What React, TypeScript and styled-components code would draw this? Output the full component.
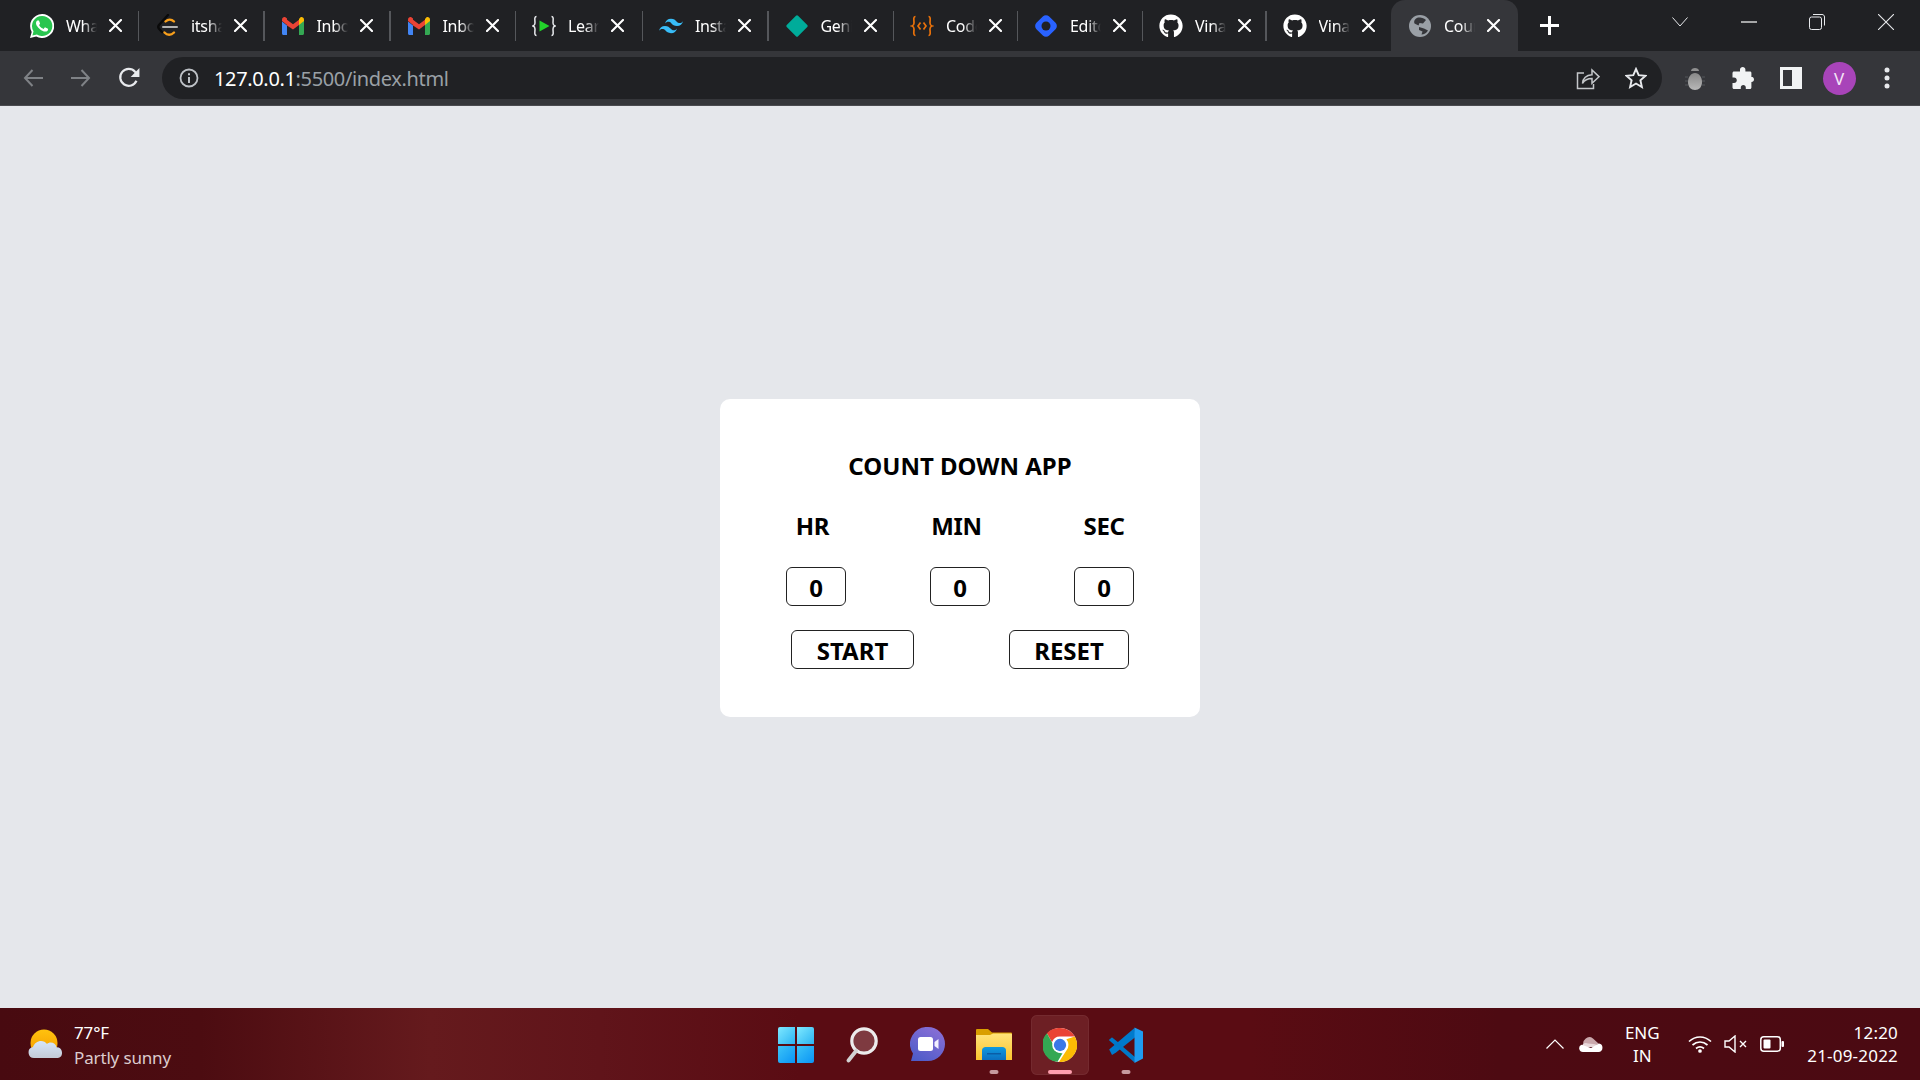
import React from "react";
import styled, { createGlobalStyle } from "styled-components";
import { FaGithub } from "react-icons/fa";
import { SiTailwindcss } from "react-icons/si";

const Global = createGlobalStyle`
  html, body { margin: 0; padding: 0; height: 100%; overflow: hidden; }
  body { font-family: "Noto Sans", "Open Sans", sans-serif; background: #e5e7eb; }
  #root { height: 100%; }
`;

const Screen = styled.div`
  display: flex;
  flex-direction: column;
  width: 1920px;
  height: 1080px;
`;

/* ---------- tab strip ---------- */
const TabStrip = styled.div`
  display: flex;
  align-items: stretch;
  height: 51px;
  padding-left: 14px;
  background: #202124;
`;

const Tab = styled.div<{ $w: number; $active?: boolean; $sep?: boolean }>`
  position: relative;
  display: flex;
  align-items: center;
  flex: 0 0 ${(p) => p.$w}px;
  box-sizing: border-box;
  padding-left: 16px;
  color: #fff;
  ${(p) =>
    p.$active &&
    `
    z-index: 0;
    &::before {
      content: "";
      position: absolute;
      z-index: -1;
      top: 0; bottom: 0; left: -1px; right: 0;
      background: #35363a;
      border-radius: 14px 14px 0 0;
    }
  `}
  ${(p) =>
    p.$sep &&
    `
    &::after {
      content: "";
      position: absolute;
      right: 0; top: 11px;
      width: 1.5px; height: 30px;
      background: #55575b;
    }
  `}
`;

const FavSlot = styled.span`
  display: flex;
  align-items: center;
  justify-content: center;
  flex: 0 0 24px;
  width: 24px;
  height: 24px;
`;

const TabLabel = styled.span`
  flex: 0 0 31px;
  width: 31px;
  margin-left: 12px;
  overflow: hidden;
  white-space: nowrap;
  font-size: 16px;
  letter-spacing: -0.3px;
  line-height: 22px;
  -webkit-mask-image: linear-gradient(90deg, #000 55%, transparent 100%);
  mask-image: linear-gradient(90deg, #000 55%, transparent 100%);
`;

const TabClose = styled.span`
  display: flex;
  margin-left: 12px;
`;

const NewTab = styled.span`
  display: flex;
  align-items: center;
  justify-content: center;
  width: 24px;
  margin-left: 19.5px;
`;

const WindowControls = styled.div`
  display: flex;
  align-self: flex-start;
  height: 44px;
  margin-left: auto;
`;

const WindowButton = styled.span`
  display: flex;
  align-items: center;
  justify-content: center;
  width: 68.5px;
`;

/* ---------- toolbar ---------- */
const Toolbar = styled.div`
  display: flex;
  align-items: center;
  height: 54px;
  padding-left: 9px;
  background: #35363a;
  border-bottom: 1px solid #4a4b4f;
`;

const ToolButton = styled.span`
  display: flex;
  align-items: center;
  justify-content: center;
  flex: 0 0 48px;
  height: 42px;
`;

const Omnibox = styled.div`
  display: flex;
  align-items: center;
  flex: 0 0 1500px;
  height: 42px;
  margin: 0 9px;
  padding: 0 2px 0 17px;
  box-sizing: border-box;
  background: #202124;
  border-radius: 21px;
`;

const Url = styled.span`
  margin-left: 15px;
  font-size: 20px;
  letter-spacing: -0.35px;
  color: #9aa0a6;
  white-space: nowrap;
`;

const UrlHost = styled.span`
  color: #fff;
`;

const OmniActions = styled.div`
  display: flex;
  margin-left: auto;
`;

const OmniAction = styled.span`
  display: flex;
  align-items: center;
  justify-content: center;
  width: 48px;
`;

const Avatar = styled.span`
  display: flex;
  align-items: center;
  justify-content: center;
  width: 33px;
  height: 33px;
  border-radius: 50%;
  background: #a844b9;
  color: #f4e6f6;
  font-size: 17px;
`;

/* ---------- page ---------- */
const Page = styled.main`
  flex: 1;
  display: flex;
  align-items: center;
  justify-content: center;
  padding-top: 2px;
  background: #e5e7eb;
`;

const Card = styled.section`
  width: 480px;
  height: 318px;
  box-sizing: border-box;
  padding-top: 51px;
  background: #fff;
  border-radius: 10px;
  color: #000;
`;

const Title = styled.h1`
  margin: 0;
  font-size: 24px;
  font-weight: 700;
  line-height: 32px;
  text-align: center;
`;

const Columns = styled.div`
  display: grid;
  grid-template-columns: repeat(3, 144px);
  justify-content: center;
  justify-items: center;
`;

const LabelRow = styled(Columns)`
  margin-top: 28px;
`;

const InputRow = styled(Columns)`
  margin-top: 25px;
`;

const UnitLabel = styled.label<{ $shift?: number }>`
  font-size: 24px;
  font-weight: 700;
  line-height: 32px;
  letter-spacing: -0.4px;
  padding-right: ${(p) => p.$shift ?? 0}px;
`;

const TimeInput = styled.input`
  width: 60px;
  height: 39px;
  box-sizing: border-box;
  padding: 2px 0 0;
  border: 1px solid #222;
  border-radius: 6px;
  background: #fff;
  color: #000;
  font-family: inherit;
  font-size: 24px;
  font-weight: 700;
  text-align: center;
`;

const ButtonRow = styled.div`
  display: flex;
  gap: 95px;
  margin-top: 24px;
  padding-left: 71px;
`;

const ActionButton = styled.button<{ $w: number }>`
  width: ${(p) => p.$w}px;
  height: 39px;
  box-sizing: border-box;
  padding: 2px 0 0;
  border: 1px solid #222;
  border-radius: 6px;
  background: #fff;
  color: #000;
  font-family: inherit;
  font-size: 24px;
  font-weight: 700;
`;

/* ---------- taskbar ---------- */
const Taskbar = styled.footer`
  display: grid;
  grid-template-columns: 1fr auto 1fr;
  align-items: center;
  height: 72px;
  color: #fff;
  background: linear-gradient(
    90deg,
    #480a10 0,
    #4c0c11 200px,
    #651a1d 430px,
    #60141a 600px,
    #5a0c13 800px,
    #5a0c13 1250px,
    #4d0a12 1500px,
    #4b0a12 1920px
  );
`;

const Weather = styled.div`
  display: flex;
  align-items: center;
  padding-left: 28px;
`;

const WeatherText = styled.div`
  margin-left: 10px;
  padding-top: 2px;
  font-size: 17px;
  line-height: 25px;
  letter-spacing: -0.15px;
`;

const WeatherSub = styled.div`
  color: #dccbce;
`;

const AppDock = styled.div`
  display: flex;
  padding: 2px 0 0 2px;
`;

const AppSlot = styled.span<{ $active?: boolean }>`
  position: relative;
  z-index: 0;
  display: flex;
  align-items: center;
  justify-content: center;
  width: 66.2px;
  height: 60px;
  ${(p) =>
    p.$active &&
    `
    &::before {
      content: "";
      position: absolute;
      z-index: -1;
      inset: 0 4px;
      border-radius: 6px;
      background: #6d1f24;
      box-shadow: inset 0 0 0 1px #742a2f;
    }
  `}
`;

const Indicator = styled.span<{ $active?: boolean }>`
  position: absolute;
  left: 50%;
  bottom: 1px;
  transform: translateX(-50%);
  width: ${(p) => (p.$active ? 24 : 9)}px;
  height: 4px;
  border-radius: 2px;
  background: ${(p) => (p.$active ? "#ff9fae" : "#c79a9f")};
`;

const Tray = styled.div`
  display: flex;
  align-items: center;
  justify-content: flex-end;
  padding-right: 22px;
`;

const TrayIcon = styled.span`
  display: flex;
  align-items: center;
  justify-content: center;
  width: 36px;
`;

const Lang = styled.div`
  width: 54px;
  margin: 0 13px 0 6px;
  font-size: 17px;
  line-height: 23px;
  text-align: center;
`;

const Clock = styled.div`
  margin-left: 17px;
  font-size: 17px;
  line-height: 23px;
  text-align: right;
  letter-spacing: 0.2px;
`;

/* ---------- icons ---------- */
const WhatsApp = () => (
  <svg width="24" height="24" viewBox="0 0 24 24">
    <path fill="#fff" d="M12 0a12 12 0 0 0-10.3 18L0 24l6.2-1.6A12 12 0 1 0 12 0z" />
    <path fill="#29c54f" d="M12 2a10 10 0 0 0-8.5 15.2L2.4 21.6l4.5-1.2A10 10 0 1 0 12 2z" />
    <path
      fill="#fff"
      d="M17.472 14.382c-.297-.149-1.758-.867-2.03-.967-.273-.099-.471-.148-.67.15-.197.297-.767.966-.94 1.164-.173.199-.347.223-.644.075-.297-.15-1.255-.463-2.39-1.475-.883-.788-1.48-1.761-1.653-2.059-.173-.297-.018-.458.13-.606.134-.133.298-.347.446-.52.149-.174.198-.298.298-.497.099-.198.05-.371-.025-.52-.075-.149-.669-1.612-.916-2.207-.242-.579-.487-.5-.669-.51-.173-.008-.371-.01-.57-.01-.198 0-.52.074-.792.372-.272.297-1.04 1.016-1.04 2.479 0 1.462 1.065 2.875 1.213 3.074.149.198 2.096 3.2 5.077 4.487.709.306 1.262.489 1.694.625.712.227 1.36.195 1.871.118.571-.085 1.758-.719 2.006-1.413.248-.694.248-1.289.173-1.413-.074-.124-.272-.198-.57-.347z"
    />
  </svg>
);

const LeetCode = () => (
  <svg width="24" height="24" viewBox="0 0 24 24" fill="none">
    <path d="M13 1 4 11c-1 1.300-1 2.500 0 3.800L7 18" stroke="#0a0a0a" strokeWidth="2.400" strokeLinecap="round" />
    <path d="M10.500 7.500c2.500-2.500 6-2.500 8.500 0" stroke="#f89f1b" strokeWidth="2.400" strokeLinecap="round" />
    <path d="M9.500 18.500c2.800 3 6.500 3 9.500 0" stroke="#f89f1b" strokeWidth="2.400" strokeLinecap="round" />
    <path d="M8 13H22" stroke="#b3b3b3" strokeWidth="2" strokeLinecap="round" />
  </svg>
);

const Gmail = () => (
  <svg width="22" height="18" viewBox="0 0 22 18">
    <path fill="#4285f4" d="M0 3v13.500C0 17.300.7 18 1.500 18H5V8.500L0 4.500z" />
    <path fill="#34a853" d="M17 18h3.500c.8 0 1.500-.7 1.500-1.500V3l-5 4z" />
    <path fill="#ea4335" d="M5 8.500V2.800L11 7.300 17 2.800V8l-6 4.500z" />
    <path fill="#ea4335" d="M0 2.500C0 .6 2.200-.6 3.700.5L5 1.500V8L0 4z" />
    <path fill="#fbbc04" d="M17 2v6l5-4V2.500c0-1.900-2.200-3-3.700-2z" />
  </svg>
);

const LearnBraces = () => (
  <svg width="24" height="24" viewBox="0 0 24 24" fill="none">
    <path d="M4.500 2.500C2 2.500 3 6 3 9c0 1.500-.8 2.600-2 3 1.200.4 2 1.500 2 3 0 3-1 6.500 1.500 6.500" stroke="#e8eaed" strokeWidth="1.500" />
    <path d="M19.500 2.500C22 2.500 21 6 21 9c0 1.500.8 2.600 2 3-1.200.4-2 1.500-2 3 0 3 1 6.500-1.500 6.500" stroke="#e8eaed" strokeWidth="1.500" />
    <path fill="#22d32a" d="M7.500 6.500 17.500 12l-10 5.500z" />
  </svg>
);

const Diamond = () => (
  <svg width="24" height="24" viewBox="0 0 24 24">
    <rect x="4" y="4" width="16" height="16" rx="1.500" transform="rotate(45 12 12)" fill="#00ac9a" />
  </svg>
);

const CodeBraces = () => (
  <svg width="24" height="24" viewBox="0 0 24 24" fill="none" stroke="#e8710a" strokeWidth="1.700">
    <path d="M5.500 2.500C3 2.500 4 6 4 9c0 1.500-.8 2.600-2 3 1.200.4 2 1.500 2 3 0 3-1 6.500 1.500 6.500" />
    <path d="M18.500 2.500C21 2.500 20 6 20 9c0 1.500.8 2.600 2 3-1.200.4-2 1.500-2 3 0 3 1 6.500-1.500 6.500" />
    <path d="M10.500 8.500 8 12l2.500 3.500M13.500 8.500 16 12l-2.500 3.500" />
  </svg>
);

const BlueDiamond = () => (
  <svg width="24" height="24" viewBox="0 0 24 24">
    <rect x="3" y="3" width="18" height="18" rx="4.500" transform="rotate(45 12 12)" fill="#2962ff" />
    <circle cx="12" cy="12" r="4.500" fill="#202124" />
  </svg>
);

const Globe = () => (
  <svg width="22" height="22" viewBox="0 0 22 22">
    <circle cx="11" cy="11" r="11" fill="#9aa0a6" />
    <path fill="#35363a" d="M9 2.500c3 0 6 .5 8 2.500l-3 3.500-3.500-.5-1 2.500-4-2C4.500 6 6 3.500 9 2.500zM10 12l5 1.500 4 2c-1.500 2.500-4 4-6.500 4l1-3-3.500-1.500z" />
  </svg>
);

const Close = () => (
  <svg width="13" height="13" viewBox="0 0 13 13" stroke="#fff" strokeWidth="2.100" strokeLinecap="round">
    <path d="M1 1l11 11M12 1 1 12" />
  </svg>
);

const Plus = () => (
  <svg width="19" height="19" viewBox="0 0 19 19" stroke="#fff" strokeWidth="3">
    <path d="M9.500 0v19M0 9.500h19" />
  </svg>
);

const ChevronDownThin = () => (
  <svg width="16" height="10" viewBox="0 0 16 10" fill="none" stroke="#e8eaed" strokeWidth="1">
    <path d="M.5.500 8 9 15.500.500" />
  </svg>
);
const Minimize = () => (
  <svg width="16" height="2" viewBox="0 0 16 2">
    <path d="M0 1h16" stroke="#fff" strokeWidth="1.200" />
  </svg>
);
const Restore = () => (
  <svg width="16" height="16" viewBox="0 0 16 16" fill="none" stroke="#e8eaed" strokeWidth="1">
    <rect x=".5" y="3" width="12" height="12.500" rx="2" />
    <path d="M4 .5h9c1.500 0 2.500 1 2.500 2.500v8.500" />
  </svg>
);
const WinClose = () => (
  <svg width="16" height="16" viewBox="0 0 16 16" stroke="#e8eaed" strokeWidth="1.100">
    <path d="M0 0l16 16M16 0 0 16" />
  </svg>
);

const Back = ({ color }: { color: string }) => (
  <svg width="20" height="18" viewBox="0 0 20 18" fill="none" stroke={color} strokeWidth="2">
    <path d="M20 9H2M9.500 1 2 9l7.500 8" />
  </svg>
);
const Forward = ({ color }: { color: string }) => (
  <svg width="20" height="18" viewBox="0 0 20 18" fill="none" stroke={color} strokeWidth="2">
    <path d="M0 9h18M10.500 1 18 9l-7.500 8" />
  </svg>
);
const Reload = () => (
  <svg width="22" height="22" viewBox="0 0 20 20" fill="none">
    <path d="M16.800 12.500A7.700 7.700 0 1 1 15.500 4.300L17 5.800" stroke="#e8eaed" strokeWidth="2" />
    <path d="M19.500 1v8h-8z" fill="#e8eaed" />
  </svg>
);
const Info = () => (
  <svg width="20" height="20" viewBox="0 0 20 20" fill="none">
    <circle cx="10" cy="10" r="8.500" stroke="#bdc1c6" strokeWidth="1.800" />
    <path d="M10 9v6M10 5.200v2" stroke="#bdc1c6" strokeWidth="2" />
  </svg>
);
const ShareIcon = () => (
  <svg width="24" height="24" viewBox="0 0 24 24" fill="none" stroke="#c4c7ca" strokeWidth="1.500">
    <path d="M8 7H1.500v15.500h16V18" />
    <path d="M6.500 17.500c.5-5.500 4-8.500 9.500-8.800V4l7 6.700-7 6.500v-4.700c-4.500 0-7.500 1.500-9.500 5z" />
  </svg>
);
const StarIcon = () => (
  <svg width="22" height="22" viewBox="0 0 22 22" fill="none" stroke="#e8eaed" strokeWidth="1.900">
    <path d="M11 2l2.700 6.200 6.800.6-5.100 4.500 1.500 6.700L11 16.500 5.100 20l1.500-6.700L1.500 8.800l6.800-.6z" />
  </svg>
);
const BugIcon = () => (
  <svg width="22" height="26" viewBox="0 0 22 26" fill="none">
    <defs>
      <linearGradient id="bug" x1="0" y1="0" x2="0" y2="1">
        <stop offset="0" stopColor="#888" />
        <stop offset="1" stopColor="#b8b8b8" />
      </linearGradient>
    </defs>
    <path d="M1 12h3M1 16h3M1 20h3M18 12h3M18 16h3M18 20h3" stroke="#55565a" strokeWidth="1" />
    <path d="M7 6c0-4 8-4 8 0z" fill="#8f8f8f" />
    <path d="M11 8c4 0 7 4 7 9 0 5-3 8-7 8s-7-3-7-8c0-5 3-9 7-9z" fill="url(#bug)" />
  </svg>
);
const PuzzleIcon = () => (
  <svg width="22" height="22" viewBox="0 0 22 22">
    <path
      fill="#f1f3f4"
      d="M8 2.600C8 1 9.300 0 10.700 0s2.700 1 2.700 2.600V4.500H18c.8 0 1.400.6 1.400 1.400v4h1C21 9.900 22 11 22 12.500S21 15 19.500 15h-.1v5.500c0 .8-.6 1.500-1.400 1.500h-4.200v-1.500c0-1.500-1-2.500-2.500-2.500s-2.500 1-2.500 2.500V22H2c-.8 0-1.500-.7-1.500-1.500v-4.600H2c1.700 0 2.800-1.200 2.800-2.700S3.700 10.400 2 10.400H.5V6c0-.8.700-1.500 1.500-1.500h6z"
    />
  </svg>
);
const PanelIcon = () => (
  <svg width="22" height="22" viewBox="0 0 22 22" fill="none">
    <path fill="#f1f3f4" fillRule="evenodd" d="M0 0h22v22H0zM3 3v16h9V3z" />
  </svg>
);
const Dots = () => (
  <svg width="6" height="22" viewBox="0 0 6 22" fill="#e8eaed">
    <circle cx="3" cy="3" r="2.500" />
    <circle cx="3" cy="11" r="2.500" />
    <circle cx="3" cy="19" r="2.500" />
  </svg>
);

const WeatherIcon = () => (
  <svg width="36" height="30" viewBox="0 0 36 30">
    <defs>
      <linearGradient id="sun" x1="0" y1="0" x2="0" y2="1">
        <stop offset="0" stopColor="#ffc20e" />
        <stop offset="1" stopColor="#f59a00" />
      </linearGradient>
      <linearGradient id="cloud" x1="0" y1="0" x2="0" y2="1">
        <stop offset="0" stopColor="#d6e6fb" />
        <stop offset="1" stopColor="#c4cad6" />
      </linearGradient>
    </defs>
    <circle cx="16" cy="14" r="13.500" fill="url(#sun)" />
    <path
      fill="url(#cloud)"
      d="M6 29a5.500 5.500 0 0 1-1-10.900C6 14.500 9.500 12 13 12c2.500 0 4.500 1.200 6 3 1-1 2.300-1.500 3.600-1.500 3 0 5.400 2 5.900 4.700a5.500 5.500 0 0 1 1.500 10.800z"
    />
  </svg>
);

const WindowsLogo = () => (
  <svg width="36" height="36" viewBox="0 0 36 36">
    <defs>
      <linearGradient id="winA" x1="0" y1="0" x2="1" y2="1">
        <stop offset="0" stopColor="#7fe9ff" />
        <stop offset="1" stopColor="#2cb4f3" />
      </linearGradient>
      <linearGradient id="winB" x1="0" y1="0" x2="1" y2="1">
        <stop offset="0" stopColor="#3cc4f7" />
        <stop offset="1" stopColor="#0a94f5" />
      </linearGradient>
    </defs>
    <path fill="url(#winA)" d="M2 0h15v17H0V2a2 2 0 0 1 2-2z" />
    <path fill="url(#winA)" d="M19 0h15a2 2 0 0 1 2 2v15H19z" />
    <path fill="url(#winB)" d="M0 19h17v17H2a2 2 0 0 1-2-2z" />
    <path fill="url(#winB)" d="M19 19h17v15a2 2 0 0 1-2 2H19z" />
  </svg>
);

const SearchIcon = () => (
  <svg width="32" height="36" viewBox="0 0 32 36" fill="none">
    <circle cx="18" cy="14" r="12.200" fill="#7e3a40" stroke="#ececec" strokeWidth="3.200" />
    <path d="M10 24 2.500 33.500" stroke="#d2d2d2" strokeWidth="3.800" strokeLinecap="round" />
  </svg>
);

const TeamsIcon = () => (
  <svg width="36" height="36" viewBox="0 0 36 36">
    <defs>
      <linearGradient id="teams" x1="0.800" y1="0" x2="0.200" y2="1">
        <stop offset="0" stopColor="#8a6fd6" />
        <stop offset="1" stopColor="#4e5cc8" />
      </linearGradient>
    </defs>
    <path fill="url(#teams)" d="M18 0a17 17 0 0 1 0 34H1l2-7.500A17 17 0 0 1 18 0z" />
    <rect x="8" y="10" width="15" height="14" rx="2.500" fill="#fff" />
    <path fill="#f2f0ff" d="M24.500 15l4-3v10l-4-3z" />
  </svg>
);

const FolderIcon = () => (
  <svg width="36" height="32" viewBox="0 0 36 32">
    <defs>
      <linearGradient id="fold" x1="0" y1="0" x2="0" y2="1">
        <stop offset="0" stopColor="#ffe27a" />
        <stop offset="1" stopColor="#fbc52e" />
      </linearGradient>
      <linearGradient id="tray" x1="0" y1="0" x2="0" y2="1">
        <stop offset="0" stopColor="#0f9ae0" />
        <stop offset="1" stopColor="#0b6fc0" />
      </linearGradient>
    </defs>
    <path fill="#d99e00" d="M1 0h11l4 3.500h19a1 1 0 0 1 1 1V9H0V1a1 1 0 0 1 1-1z" />
    <path fill="url(#fold)" d="M0 6h14l3-1.500h18a1 1 0 0 1 1 1V31H0z" />
    <path fill="url(#tray)" d="M6 31v-9.500c0-2 1.500-3.500 3.500-3.500h17c2 0 3.500 1.500 3.500 3.500V31z" />
    <path fill="#0a5da6" d="M11 24h14v1.500H11z" />
  </svg>
);

const ChromeIcon = () => (
  <svg width="34" height="34" viewBox="0 0 48 48">
    <circle cx="24" cy="24" r="24" fill="#fff" />
    <path fill="#ea4335" d="M24 0a24 24 0 0 1 20.800 12H24a12 12 0 0 0-11.300 8L5.500 7.500A24 24 0 0 1 24 0z" />
    <path fill="#34a853" d="M5.500 7.500 14 22.500A12 12 0 0 0 27.500 35.500L20.500 47.800A24 24 0 0 1 5.500 7.500z" />
    <path fill="#fbbc04" d="M44.800 12A24 24 0 0 1 22.500 48L33.500 31A12 12 0 0 0 33 16z" />
    <circle cx="24" cy="24" r="11" fill="#fff" />
    <circle cx="24" cy="24" r="8.700" fill="#3b78e7" />
  </svg>
);

const VSCodeIcon = () => (
  <svg width="36" height="36" viewBox="0 0 36 36">
    <path fill="#0065a9" d="M1 13l3-2.500 7.500 5.700-3.200 3z" />
    <path fill="#007acc" d="M1.200 22.500 26.500 1 27.500 10 8 25.500 4 28z" />
    <path fill="#0078c8" d="M1 13 4 10.500l23.500 20 -1 5z" />
    <path fill="#1f9cf0" d="M26.500.5 35 4.500v27l-8.500 4.500z" />
  </svg>
);

const TrayChevron = () => (
  <svg width="18" height="10" viewBox="0 0 18 10" fill="none" stroke="#fff" strokeWidth="1.200">
    <path d="M.5 9.500 9 1l8.500 8.500" />
  </svg>
);
const OneDrive = () => (
  <svg width="24" height="15" viewBox="0 0 24 15">
    <path fill="#c9a8ac" d="M5 9a6 6 0 0 1 9-7.500L20 7l-15 3z" />
    <path fill="#e8d8da" d="M3 9a4 4 0 0 1 6-2.500l10 1L16 10H3z" />
    <path fill="#fff" d="M4 15a3.800 3.800 0 0 1-1.500-7.300L12 11l8-4.500a4.300 4.300 0 0 1-.5 8.500z" />
  </svg>
);
const Wifi = () => (
  <svg width="24" height="18" viewBox="0 0 24 18" fill="none" stroke="#fff" strokeWidth="1.700">
    <path d="M1 6.500c6.500-6 15.500-6 22 0M4.500 10c4.500-4 10.500-4 15 0M8 13.500c2.500-2 5.500-2 8 0" />
    <circle cx="12" cy="16" r="1" fill="#fff" />
  </svg>
);
const Muted = () => (
  <svg width="24" height="18" viewBox="0 0 24 18" fill="none" stroke="#fff" strokeWidth="1.400">
    <path d="M1 6v6h4l6 5V1L5 6z" />
    <path d="M16 6l6 6M22 6l-6 6" />
  </svg>
);
const Battery = () => (
  <svg width="24" height="16" viewBox="0 0 24 16" fill="none">
    <rect x=".8" y=".8" width="19.500" height="14.400" rx="3" stroke="#fff" strokeWidth="1.500" />
    <rect x="3.500" y="3.500" width="7" height="9" rx="1" fill="#fff" />
    <rect x="21.500" y="5" width="2.500" height="6" rx="1" fill="#fff" />
  </svg>
);

const tabs: { label: string; w: number; icon: React.ReactNode }[] = [
  { label: "WhatsApp", w: 125, icon: <WhatsApp /> },
  { label: "itshaa", w: 125.5, icon: <LeetCode /> },
  { label: "Inbox", w: 126, icon: <Gmail /> },
  { label: "Inbox", w: 125.5, icon: <Gmail /> },
  { label: "Learn", w: 127, icon: <LearnBraces /> },
  { label: "Install", w: 125.5, icon: <SiTailwindcss size={24} color="#38bdf8" /> },
  { label: "Genie", w: 125.5, icon: <Diamond /> },
  { label: "Code", w: 124, icon: <CodeBraces /> },
  { label: "Editor", w: 125, icon: <BlueDiamond /> },
  { label: "Vinay", w: 123.5, icon: <FaGithub size={24} color="#fff" /> },
  { label: "Vinay", w: 125.5, icon: <FaGithub size={24} color="#fff" /> },
  { label: "Count", w: 125.5, icon: <Globe /> },
];

const fields = [
  { label: "HR", shift: 7 },
  { label: "MIN", shift: 7 },
  { label: "SEC", shift: 0 },
];

export default function App() {
  return (
    <Screen>
      <Global />
      <TabStrip>
        {tabs.map((t, i) => (
          <Tab key={i} $w={t.w} $active={i === 11} $sep={i < 10}>
            <FavSlot>{t.icon}</FavSlot>
            <TabLabel>{t.label}</TabLabel>
            <TabClose>
              <Close />
            </TabClose>
          </Tab>
        ))}
        <NewTab>
          <Plus />
        </NewTab>
        <WindowControls>
          <WindowButton>
            <ChevronDownThin />
          </WindowButton>
          <WindowButton>
            <Minimize />
          </WindowButton>
          <WindowButton>
            <Restore />
          </WindowButton>
          <WindowButton>
            <WinClose />
          </WindowButton>
        </WindowControls>
      </TabStrip>

      <Toolbar>
        <ToolButton>
          <Back color="#7f8286" />
        </ToolButton>
        <ToolButton>
          <Forward color="#7f8286" />
        </ToolButton>
        <ToolButton>
          <Reload />
        </ToolButton>
        <Omnibox>
          <Info />
          <Url>
            <UrlHost>127.0.0.1</UrlHost>:5500/index.html
          </Url>
          <OmniActions>
            <OmniAction>
              <ShareIcon />
            </OmniAction>
            <OmniAction>
              <StarIcon />
            </OmniAction>
          </OmniActions>
        </Omnibox>
        <ToolButton>
          <BugIcon />
        </ToolButton>
        <ToolButton>
          <PuzzleIcon />
        </ToolButton>
        <ToolButton>
          <PanelIcon />
        </ToolButton>
        <ToolButton>
          <Avatar>V</Avatar>
        </ToolButton>
        <ToolButton>
          <Dots />
        </ToolButton>
      </Toolbar>

      <Page>
        <Card>
          <Title>COUNT DOWN APP</Title>
          <LabelRow>
            {fields.map((f) => (
              <UnitLabel key={f.label} $shift={f.shift}>
                {f.label}
              </UnitLabel>
            ))}
          </LabelRow>
          <InputRow>
            {fields.map((f) => (
              <TimeInput key={f.label} type="text" defaultValue="0" aria-label={f.label} />
            ))}
          </InputRow>
          <ButtonRow>
            <ActionButton $w={123}>START</ActionButton>
            <ActionButton $w={120}>RESET</ActionButton>
          </ButtonRow>
        </Card>
      </Page>

      <Taskbar>
        <Weather>
          <WeatherIcon />
          <WeatherText>
            <div>77°F</div>
            <WeatherSub>Partly sunny</WeatherSub>
          </WeatherText>
        </Weather>
        <AppDock>
          <AppSlot>
            <WindowsLogo />
          </AppSlot>
          <AppSlot>
            <SearchIcon />
          </AppSlot>
          <AppSlot>
            <TeamsIcon />
          </AppSlot>
          <AppSlot>
            <FolderIcon />
            <Indicator />
          </AppSlot>
          <AppSlot $active>
            <ChromeIcon />
            <Indicator $active />
          </AppSlot>
          <AppSlot>
            <VSCodeIcon />
            <Indicator />
          </AppSlot>
        </AppDock>
        <Tray>
          <TrayIcon>
            <TrayChevron />
          </TrayIcon>
          <TrayIcon>
            <OneDrive />
          </TrayIcon>
          <Lang>
            ENG
            <br />
            IN
          </Lang>
          <TrayIcon>
            <Wifi />
          </TrayIcon>
          <TrayIcon>
            <Muted />
          </TrayIcon>
          <TrayIcon>
            <Battery />
          </TrayIcon>
          <Clock>
            12:20
            <br />
            21-09-2022
          </Clock>
        </Tray>
      </Taskbar>
    </Screen>
  );
}
